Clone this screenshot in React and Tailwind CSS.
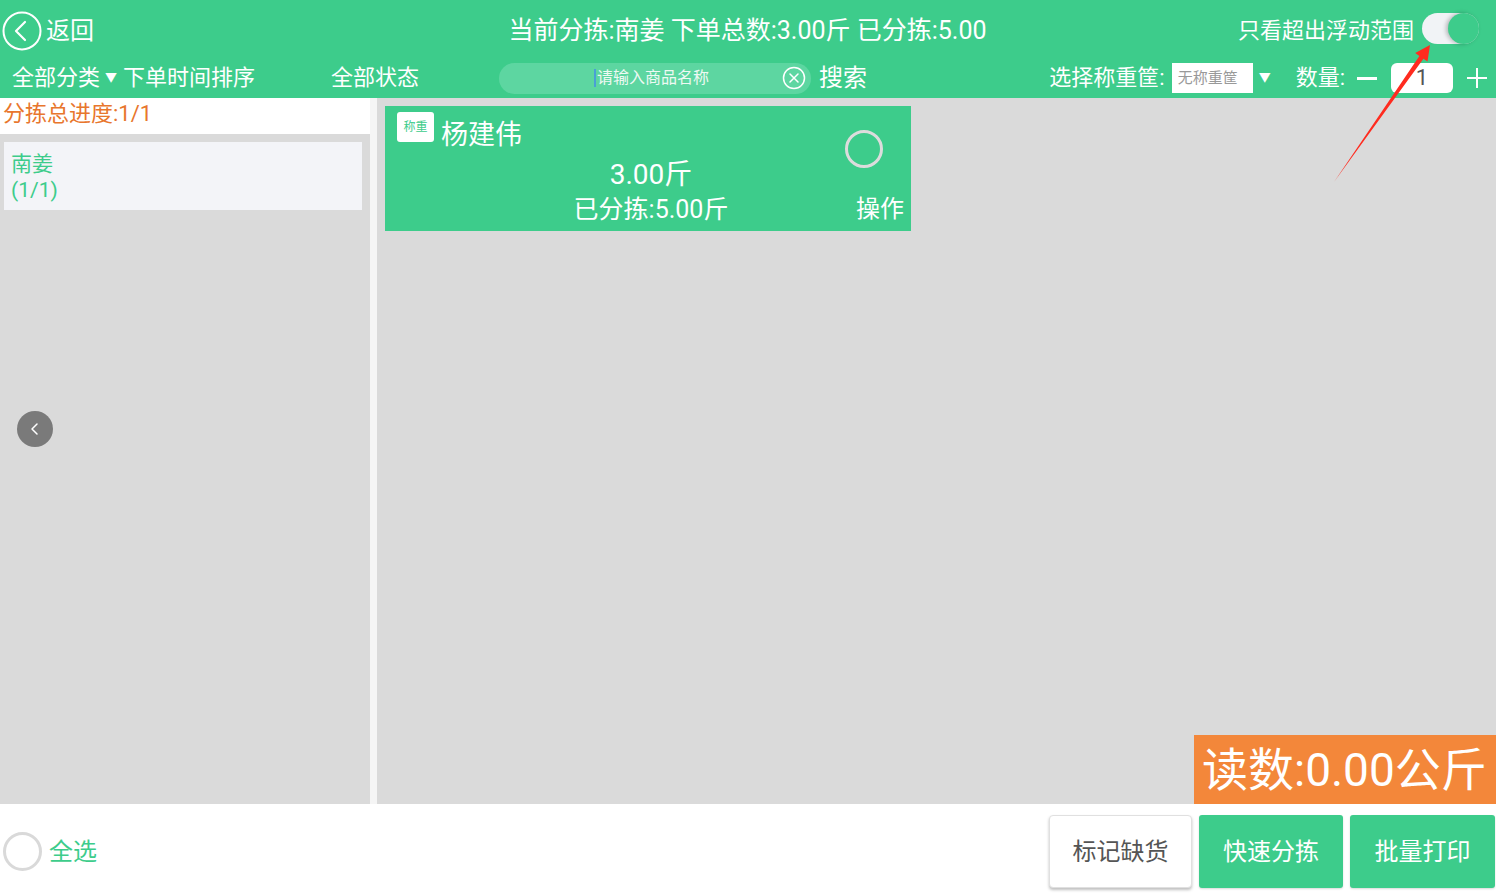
import React from "react";

function BackIcon() {
  return (
    <svg width="40" height="40" viewBox="0 0 40 40">
      <circle cx="20" cy="20" r="18.5" fill="none" stroke="white" strokeWidth="2" />
      <path d="M23 11 L14 20 L23 29" fill="none" stroke="white" strokeWidth="2.2" strokeLinecap="round" strokeLinejoin="round" />
    </svg>
  );
}

function ClearIcon() {
  return (
    <svg width="24" height="24" viewBox="0 0 24 24">
      <circle cx="12" cy="12" r="10.5" fill="none" stroke="white" strokeWidth="1.5" />
      <path d="M8 8 L16 16 M16 8 L8 16" stroke="white" strokeWidth="1.5" strokeLinecap="round" />
    </svg>
  );
}

export default function App() {
  return (
    <div className="relative w-[1496px] h-[895px] overflow-hidden bg-white font-['Roboto','Noto_Sans_CJK_SC',sans-serif] flex flex-col">
      {/* Header */}
      <div className="h-[98px] bg-[#3dcc8b] text-white flex flex-col shrink-0">
        <div className="h-[58px] pt-[3px] flex items-center">
          <div className="flex-1 flex items-center pl-[2px]">
            <BackIcon />
            <span className="ml-[4px] text-[24px] leading-none">返回</span>
          </div>
          <div className="text-[25px] leading-none whitespace-nowrap pl-[14px]">当前分拣:南姜 下单总数:3.00斤 已分拣:5.00</div>
          <div className="flex-1 flex items-center justify-end pr-[17px]">
            <span className="text-[22px] leading-none">只看超出浮动范围</span>
            <div className="ml-[8px] w-[57px] h-[31px] rounded-full bg-[#f1f3f6] relative mt-[-4px]">
              <div className="absolute right-0 top-0 w-[31px] h-[31px] rounded-full bg-[#3dcc8b] shadow-[-2px_0_4px_rgba(0,0,0,0.25)]" />
            </div>
          </div>
        </div>
        <div className="h-[40px] flex items-center">
          <span className="ml-[12px] text-[22px] leading-none">全部分类</span>
          <span className="ml-[5px] text-[12px] leading-none">▼</span>
          <span className="ml-[6px] text-[22px] leading-none">下单时间排序</span>
          <span className="ml-[76px] text-[22px] leading-none">全部状态</span>
          <div className="ml-[80px] w-[312px] h-[31px] rounded-full bg-[#5dd6a1] flex items-center relative">
            <div className="flex-1 flex justify-center items-center pl-[22px]">
              <span className="w-[2px] h-[18px] bg-[#4a9fd6] mr-[1px]" />
              <span className="text-[16px] leading-none text-[#eef9f3]">请输入商品名称</span>
            </div>
            <div className="mr-[5px] flex items-center"><ClearIcon /></div>
          </div>
          <span className="ml-[8px] text-[24px] leading-none">搜索</span>
          <div className="ml-auto flex items-center pr-[9px]">
            <span className="text-[22px] leading-none">选择称重筐:</span>
            <div className="ml-[7px] w-[81px] h-[30px] bg-white flex items-center pl-[6px] text-[15px] text-[#999] leading-none">无称重筐</div>
            <span className="ml-[6px] text-[12px] leading-none">▼</span>
            <span className="ml-[25px] text-[22px] leading-none">数量:</span>
            <span className="ml-[12px] w-[20px] h-[3px] bg-white" />
            <div className="ml-[14px] w-[62px] h-[30px] bg-white rounded-[6px] flex items-center justify-center text-[22px] text-[#555] leading-none">1</div>
            <svg className="ml-[14px]" width="20" height="20" viewBox="0 0 20 20">
              <path d="M10 0 V20 M0 10 H20" stroke="white" strokeWidth="2" />
            </svg>
          </div>
        </div>
      </div>

      {/* Main */}
      <div className="flex h-[706px] shrink-0">
        <div className="w-[370px] flex flex-col relative">
          <div className="h-[36px] flex items-center pl-[3px] pb-[4px] text-[22px] text-[#e8762d] leading-none bg-white">分拣总进度:1/1</div>
          <div className="flex-1 bg-[#dadada] pt-[8px] pl-[4px] pr-[8px]">
            <div className="h-[68px] bg-[#f3f4f8] pl-[7px] pt-[9px] text-[#3dcc8b] text-[21px] leading-[26px]">
              <div>南姜</div>
              <div>(1/1)</div>
            </div>
          </div>
          <div className="absolute left-[17px] top-[313px] w-[36px] h-[36px] rounded-full bg-[#7a7a7a] flex items-center justify-center">
            <svg width="14" height="14" viewBox="0 0 14 14">
              <path d="M9 2 L4 7 L9 12" fill="none" stroke="white" strokeWidth="1.5" strokeLinecap="round" strokeLinejoin="round" />
            </svg>
          </div>
        </div>
        <div className="w-[7px] bg-[#f5f5f5]" />
        <div className="flex-1 bg-[#dadada] p-[8px] relative">
          <div className="w-[526px] h-[125px] bg-[#3dcc8b] relative text-white">
            <div className="flex items-start pl-[12px] pt-[6px]">
              <div className="w-[37px] h-[30px] bg-white rounded-[3px] flex items-center justify-center text-[12px] text-[#3dcc8b] leading-none">称重</div>
              <span className="ml-[7px] mt-[10px] text-[27px] leading-none">杨建伟</span>
            </div>
            <div className="flex flex-col items-center mt-[9px] pl-[6px]">
              <div className="text-[28px] leading-[34px]">3.00斤</div>
              <div className="text-[25px] leading-[36px]">已分拣:5.00斤</div>
            </div>
            <div className="absolute left-[460px] top-[24px] w-[38px] h-[38px] rounded-full border-[3px] border-[#dcdcdc]" />
            <div className="absolute left-[471px] top-[91px] text-[24px] leading-none">操作</div>
          </div>
          <div className="absolute right-0 bottom-0 w-[302px] h-[69px] bg-[#f3873a] text-white text-[46px] leading-none flex items-center pl-[8px] whitespace-nowrap">读数:0.00公斤</div>
        </div>
      </div>

      {/* Bottom */}
      <div className="flex-1 flex items-center">
        <div className="ml-[3px] w-[39px] h-[39px] rounded-full border-[3px] border-[#d9d9d9] mt-[4px]" />
        <span className="ml-[7px] text-[24px] text-[#3dcc8b] leading-none mt-[4px]">全选</span>
        <div className="ml-auto flex gap-[7px] pr-[1px] self-start mt-[11px]">
          <div className="w-[143px] h-[73px] rounded-[4px] bg-white border border-[#e0e0e0] shadow-[0_2px_3px_rgba(0,0,0,0.25)] flex items-center justify-center text-[24px] text-[#555]">标记缺货</div>
          <div className="w-[144px] h-[73px] rounded-[3px] bg-[#3dcc8b] flex items-center justify-center text-[24px] text-white shadow-[0_1px_2px_rgba(0,0,0,0.15)]">快速分拣</div>
          <div className="w-[145px] h-[73px] rounded-[3px] bg-[#3dcc8b] flex items-center justify-center text-[24px] text-white shadow-[0_1px_2px_rgba(0,0,0,0.15)]">批量打印</div>
        </div>
      </div>

      {/* Red annotation arrow */}
      <svg className="absolute left-0 top-0 pointer-events-none" width="1496" height="895">
        <polygon points="1334,182 1419.4,55.9 1415.2,53 1430,45 1427.5,61.6 1423.4,58.8" fill="#ff2b1f" />
      </svg>
    </div>
  );
}
